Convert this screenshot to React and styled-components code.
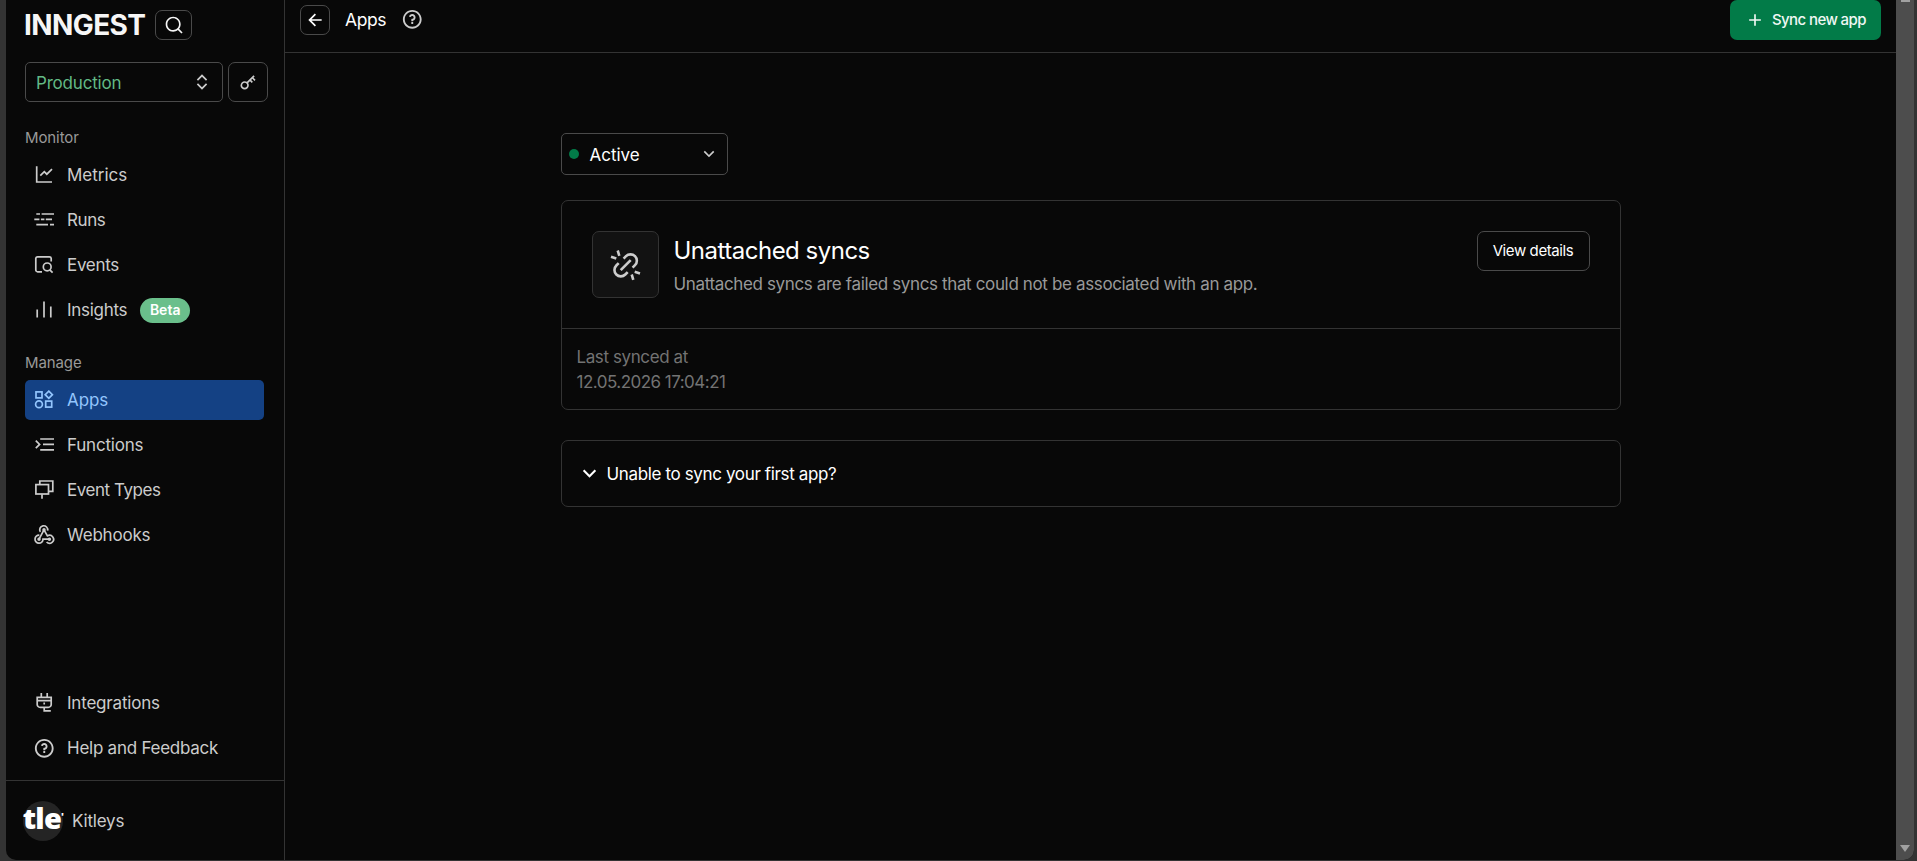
import React from 'react';
import styled, { createGlobalStyle } from "styled-components";
import {
    RiAddLine,
    RiArrowDownSLine,
    RiArrowLeftLine,
    RiExpandUpDownLine,
    RiKey2Line,
    RiQuestionLine,
    RiSearchLine
} from 'react-icons/ri';


const MetricsIcon = () => (
    <Glyph>
        <path d="M2.7 1.2V17H18" />
        <path d="M6.3 10.6L10.3 6.6L12.8 9.2L18 4.2" />
    </Glyph>
);

const RunsIcon = () => (
    <Glyph>
        <path d="M2.3 4H6M7.6 4H20M.3 9.3H5.4M6.9 9.3H10.4M11.8 9.3H18M2.3 14.7H14M16 14.7H20" />
    </Glyph>
);

const EventsIcon = () => (
    <Glyph>
        <path d="M8 16.8H3.6A1.8 1.8 0 0 1 1.8 15V3.2A1.8 1.8 0 0 1 3.6 1.8H15.4A1.8 1.8 0 0 1 17.2 3.4V6.6" />
        <circle cx="13.2" cy="11.9" r="3.9" />
        <path d="M15.8 14.8L18.6 17.7" />
    </Glyph>
);

const InsightsIcon = () => (
    <Glyph>
        <path d="M3.2 9.6V17.4M10 1.4V17.4M16.8 6.4V17.4" />
    </Glyph>
);

const AppsIcon = () => (
    <Glyph>
        <rect x="2" y="1.9" width="6" height="6" />
        <path d="M14.8 1.1L18.4 4.7L14.8 8.3L11.2 4.7Z" />
        <circle cx="5" cy="14.2" r="3.4" />
        <rect x="11.7" y="11.1" width="6" height="6" />
    </Glyph>
);

const FunctionsIcon = () => (
    <Glyph>
        <path d="M1.8 5.6L5.6 9.4L1.8 13.2" />
        <path d="M6.2 4H20M9 9.4H20M6.2 14.8H20" />
    </Glyph>
);

const EventTypesIcon = () => (
    <Glyph>
        <rect x="1.9" y="4.6" width="12.6" height="9.4" />
        <path d="M5.8 4.4V1H18.8V11.4H14.8M8 14.2V18.8" />
    </Glyph>
);

const WebhooksIcon = () => (
    <Glyph>
        <path d="M6.3 6.9A4 4 0 1 1 13.6 5.6M10 4.8L5 14.2M5.3 10.2A4 4 0 1 0 9 14.2H15.2M10 4.8L13.4 10.9A4 4 0 1 1 12.6 17" />
        <circle cx="10" cy="4.8" r=".9" />
        <circle cx="5" cy="14.2" r=".9" />
        <circle cx="15.4" cy="14.2" r=".9" />
    </Glyph>
);

const IntegrationsIcon = () => (
    <Glyph>
        <path d="M7.3 0V4M13.2 0V4" />
        <path d="M3.2 4.4H17.2V11.4A3 3 0 0 1 14.2 14.4H6.2A3 3 0 0 1 3.2 11.4Z" />
        <path d="M3.2 7.6H17.2M10.2 9.6V11.4M10.2 14.4V17.8H16.8" />
    </Glyph>
);

const UnlinkIcon = () => (
    <UnlinkGlyph>
        <path d="M12.6 8.6L15 6.2A6.3 6.3 0 0 1 24 15.2L21.6 17.6" />
        <path d="M7.7 13.1L5.3 15.5A6.3 6.3 0 0 0 14.3 24.5L16.7 22.1" />
        <path d="M9.7 20.1L19.7 10.1" />
        <path d="M6.7 .5L8.3 5.8M0 6.8L5.3 8.6M20.7 24.5L22.3 29.8M23.7 21.7L29 23.4" />
    </UnlinkGlyph>
);

const monitorItems = [
    { label: 'Metrics', icon: <MetricsIcon />, spacing: '0' },
    { label: 'Runs', icon: <RunsIcon />, spacing: '-0.4px' },
    { label: 'Events', icon: <EventsIcon />, spacing: '-0.3px' },
    { label: 'Insights', icon: <InsightsIcon />, spacing: '-0.3px', badge: 'Beta' },
];

const manageItems = [
    { label: 'Apps', icon: <AppsIcon />, spacing: '-0.1px', active: true },
    { label: 'Functions', icon: <FunctionsIcon />, spacing: '-0.2px' },
    { label: 'Event Types', icon: <EventTypesIcon />, spacing: '-0.45px' },
    { label: 'Webhooks', icon: <WebhooksIcon />, spacing: '-0.2px' },
];

const helpItems = [
    { label: 'Integrations', icon: <IntegrationsIcon />, spacing: '-0.2px' },
    { label: 'Help and Feedback', icon: <RiQuestionLine size={22.5} />, spacing: '-0.25px' },
];


function NavItems({ items }) {
    return items.map((item) => (
        <NavItem key={item.label} $active={item.active}>
            <NavIcon>{item.icon}</NavIcon>
            <NavLabel $spacing={item.spacing}>{item.label}</NavLabel>
            {item.badge && <Badge>{item.badge}</Badge>}
        </NavItem>
    ));
}

function App() {
    return (
        <>
            <GlobalStyle />
            <Frame>
                <Window>
                    <Sidebar>
                        <Brand>
                            <Logo>INNGEST</Logo>
                            <SearchButton><RiSearchLine size={20} /></SearchButton>
                        </Brand>
                        <Environment>
                            <EnvSelect>
                                <Label $spacing="-0.2px">Production</Label>
                                <RiExpandUpDownLine size={20} />
                            </EnvSelect>
                            <KeyButton><RiKey2Line size={20} /></KeyButton>
                        </Environment>
                        <Nav>
                            <NavTitle>Monitor</NavTitle>
                            <NavItems items={monitorItems} />
                            <NavTitle>Manage</NavTitle>
                            <NavItems items={manageItems} />
                        </Nav>
                        <HelpNav>
                            <NavItems items={helpItems} />
                        </HelpNav>
                        <Profile>
                            <Avatar>tle<AvatarTick>'</AvatarTick></Avatar>
                            <Label $spacing="-0.2px">Kitleys</Label>
                        </Profile>
                    </Sidebar>

                    <Main>
                        <Header>
                            <BackButton><RiArrowLeftLine size={20} /></BackButton>
                            <PageTitle>Apps</PageTitle>
                            <RiQuestionLine size={22.5} />
                            <SyncButton>
                                <RiAddLine size={20} />
                                <span>Sync new app</span>
                            </SyncButton>
                        </Header>

                        <Content>
                            <StatusSelect>
                                <Dot />
                                <Label $spacing="0">Active</Label>
                                <RiArrowDownSLine size={20} />
                            </StatusSelect>

                            <Card>
                                <CardTop>
                                    <CardIcon><UnlinkIcon /></CardIcon>
                                    <CardText>
                                        <CardTitle>Unattached syncs</CardTitle>
                                        <Desc>Unattached syncs are failed syncs that could not be associated with an app.</Desc>
                                    </CardText>
                                    <DetailsButton>View details</DetailsButton>
                                </CardTop>
                                <CardBottom>
                                    <SyncLabel>Last synced at</SyncLabel>
                                    <SyncTime>12.05.2026 17:04:21</SyncTime>
                                </CardBottom>
                            </Card>

                            <Accordion>
                                <RiArrowDownSLine size={25} />
                                <Label $spacing="-0.36px">Unable to sync your first app?</Label>
                            </Accordion>
                        </Content>
                    </Main>

                    <Scrollbar>
                        <Thumb />
                        <ScrollArrow />
                    </Scrollbar>
                </Window>
            </Frame>
        </>
    );
}

export default App;


const GlobalStyle = createGlobalStyle`
    * {
        box-sizing: border-box;
    }

    body {
        margin: 0;
        overflow: hidden;
        background: #333333;
        color: #cccccc;
        font-family: Inter, "Liberation Sans", sans-serif;
        font-size: 17px;
    }

    button {
        font-family: inherit;
        cursor: pointer;
    }

    svg {
        flex: none;
    }
`;

const Frame = styled.div`
    height: 861px;
    padding: 0 3px 1px 6px;
    background: #333333;
`;

const Window = styled.div`
    display: flex;
    height: 860px;
    overflow: hidden;
    background: #080808;
    border-radius: 0 0 10px 10px;
`;

const Glyph = styled.svg.attrs({ viewBox: '0 0 20 20' })`
    width: 20px;
    height: 20px;
    fill: none;
    stroke: currentColor;
    stroke-width: 1.7;
    overflow: visible;
`;

const UnlinkGlyph = styled.svg.attrs({ viewBox: '0 0 29 30' })`
    width: 29px;
    height: 30px;
    fill: none;
    stroke: currentColor;
    stroke-width: 2.6;
    overflow: visible;
`;

const Label = styled.span`
    padding-top: 1px;
    letter-spacing: ${(props) => props.$spacing || '0'};
    line-height: 24px;
    white-space: nowrap;
`;

const NavLabel = styled(Label)`
    padding-top: 0;
`;

const Sidebar = styled.aside`
    display: flex;
    flex-direction: column;
    flex: none;
    width: 279px;
    border-right: 1px solid #333333;
`;

const Brand = styled.div`
    display: flex;
    align-items: center;
    height: 50px;
    padding: 0 0 0 18px;
`;

const Logo = styled.div`
    width: 131px;
    font-size: 28px;
    font-weight: 700;
    line-height: 30px;
    letter-spacing: -0.6px;
    color: #f6f6f6;
`;

const IconButton = styled.button`
    display: flex;
    align-items: center;
    justify-content: center;
    flex: none;
    padding: 0;
    background: transparent;
    border: 1px solid #4a4a4a;
    border-radius: 7px;
    color: #cccccc;
`;

const SearchButton = styled(IconButton)`
    width: 37px;
    height: 30px;
    color: #f6f6f6;
`;

const Environment = styled.div`
    display: flex;
    gap: 5px;
    padding: 12px 0 0 19px;
`;

const EnvSelect = styled.div`
    display: flex;
    align-items: center;
    justify-content: space-between;
    width: 198px;
    height: 40px;
    padding: 0 10px;
    border: 1px solid #4a4a4a;
    border-radius: 5px;

    span {
        color: #62b985;
    }
`;

const KeyButton = styled(IconButton)`
    width: 40px;
    height: 40px;
`;

const Nav = styled.nav`
    display: flex;
    flex-direction: column;
    padding: 22px 20px 0 19px;
`;

const NavTitle = styled.div`
    height: 31px;
    line-height: 27px;
    font-size: 15px;
    color: #999999;
    letter-spacing: -0.1px;

    &:not(:first-child) {
        margin-top: 14px;
    }
`;

const NavItem = styled.a`
    display: flex;
    align-items: center;
    height: 40px;
    margin-bottom: 5px;
    padding-left: 7px;
    border-radius: 5px;
    background: ${(props) => (props.$active ? '#144184' : 'transparent')};
    color: ${(props) => (props.$active ? '#93c5fd' : '#cccccc')};
    cursor: pointer;
`;

const NavIcon = styled.span`
    display: flex;
    align-items: center;
    justify-content: center;
    width: 24px;
    margin-right: 11px;
`;

const Badge = styled.span`
    display: flex;
    align-items: center;
    justify-content: center;
    width: 50px;
    height: 25px;
    margin-left: 13px;
    padding-bottom: 1px;
    border-radius: 13px;
    background: #6abf8b;
    color: #ffffff;
    font-size: 14px;
    font-weight: 600;
`;

const HelpNav = styled(Nav)`
    margin-top: auto;
    padding-top: 0;
    padding-bottom: 7px;
`;

const Profile = styled.div`
    display: flex;
    align-items: center;
    height: 80px;
    padding-left: 17px;
    border-top: 1px solid #333333;
`;

const Avatar = styled.div`
    display: flex;
    justify-content: center;
    width: 40px;
    height: 40px;
    margin-right: 9px;
    border-radius: 50%;
    background: #242424;
    color: #ffffff;
    font-family: "Open Sans", sans-serif;
    font-size: 29px;
    font-weight: 800;
    line-height: 33px;
    letter-spacing: -0.8px;
    white-space: nowrap;
`;

const AvatarTick = styled.span`
    font-size: 10px;
    line-height: 33px;
`;

const Main = styled.main`
    flex: 1;
    min-width: 0;
`;

const Header = styled.header`
    display: flex;
    align-items: flex-start;
    height: 53px;
    padding: 0 15px;
    border-bottom: 1px solid #333333;

    > svg {
        margin-top: 8px;
    }
`;

const BackButton = styled(IconButton)`
    width: 30px;
    height: 30px;
    margin-top: 5px;
    color: #ffffff;
`;

const PageTitle = styled.h1`
    width: 56px;
    margin: 8px 0 0 15px;
    font-size: 17.5px;
    font-weight: 400;
    line-height: 24px;
    letter-spacing: -0.4px;
    color: #ffffff;
`;

const SyncButton = styled.button`
    display: flex;
    align-items: center;
    gap: 7px;
    width: 151px;
    height: 40px;
    margin-left: auto;
    padding: 0 0 1px 15px;
    border: none;
    border-radius: 7px;
    background: #027b48;
    color: #f0f8f4;
    font-size: 15px;
    font-weight: 500;
    letter-spacing: -0.6px;
    white-space: nowrap;
`;

const Content = styled.div`
    width: 1060px;
    margin: 80px auto 0;
`;

const StatusSelect = styled.div`
    display: flex;
    align-items: center;
    width: 167px;
    height: 42px;
    padding: 0 8px 0 7px;
    border: 1px solid #4a4a4a;
    border-radius: 5px;

    span {
        color: #ffffff;
    }

    svg {
        margin-left: auto;
    }
`;

const Dot = styled.i`
    width: 10px;
    height: 10px;
    margin-right: 11px;
    border-radius: 50%;
    background: #027b48;
`;

const Card = styled.section`
    height: 210px;
    margin-top: 25px;
    border: 1px solid #333333;
    border-radius: 7px;
`;

const CardTop = styled.div`
    display: flex;
    align-items: flex-start;
    height: 128px;
    padding: 30px 30px 0;
    border-bottom: 1px solid #333333;
`;

const CardIcon = styled.div`
    display: flex;
    align-items: center;
    justify-content: center;
    width: 67px;
    height: 67px;
    border: 1px solid #333333;
    border-radius: 7px;
    background: #121212;
`;

const CardText = styled.div`
    padding: 4px 0 0 15px;
`;

const CardTitle = styled.h2`
    margin: 0;
    font-size: 24px;
    font-weight: 400;
    line-height: 32px;
    letter-spacing: -0.5px;
    color: #ffffff;
`;

const Desc = styled.p`
    margin: 5px 0 0;
    line-height: 24px;
    letter-spacing: -0.36px;
    color: #999999;
    white-space: nowrap;
`;

const DetailsButton = styled(IconButton)`
    width: 113px;
    height: 40px;
    margin-left: auto;
    padding-bottom: 1px;
    color: #ffffff;
    font-size: 15px;
    letter-spacing: -0.4px;
`;

const CardBottom = styled.div`
    padding: 16px 15px;
    line-height: 25px;
    color: #737373;
`;

const SyncLabel = styled.div`
    letter-spacing: -0.4px;
`;

const SyncTime = styled.div`
    letter-spacing: -0.52px;
`;

const Accordion = styled.div`
    display: flex;
    align-items: center;
    gap: 5px;
    height: 67px;
    margin-top: 30px;
    padding: 0 0 1px 15px;
    border: 1px solid #333333;
    border-radius: 7px;
    color: #ffffff;
`;

const Scrollbar = styled.div`
    display: flex;
    flex-direction: column;
    align-items: center;
    justify-content: space-between;
    flex: none;
    width: 18px;
    padding-bottom: 8px;
    background: #4d4d4d;
`;

const Thumb = styled.div`
    width: 9px;
    height: 2px;
    background: #a0a0a0;
`;

const ScrollArrow = styled.div`
    border-top: 7px solid #a0a0a0;
    border-left: 5px solid transparent;
    border-right: 5px solid transparent;
`;
